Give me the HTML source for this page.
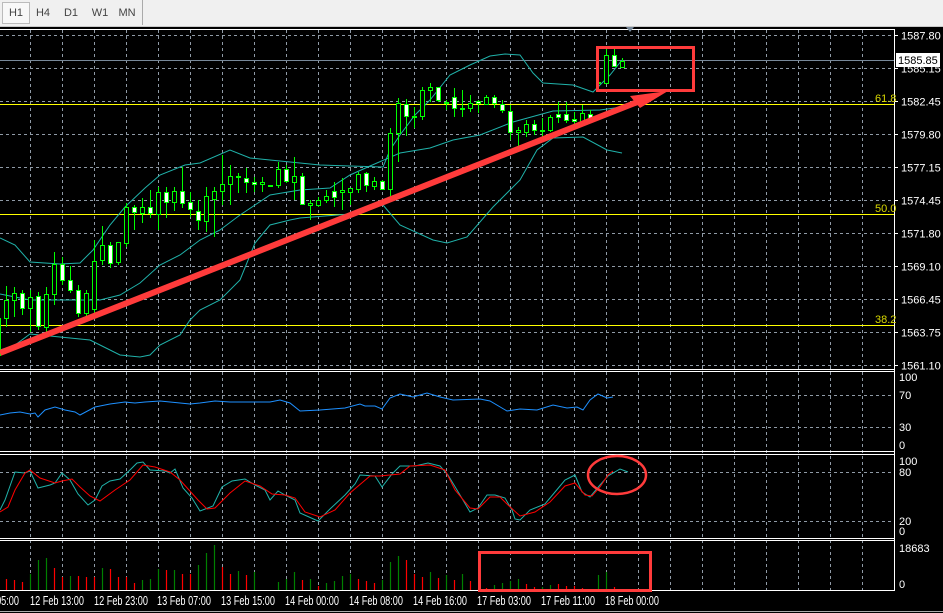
<!DOCTYPE html>
<html><head><meta charset="utf-8"><style>
html,body{margin:0;padding:0;background:#000;width:943px;height:613px;overflow:hidden;font-family:"Liberation Sans",sans-serif}
#tb{position:absolute;left:0;top:0;width:943px;height:26px;background:#f0f0f0;border-bottom:1px solid #c8c8c8}
.b{position:absolute;top:4px;height:18px;line-height:18px;font-size:11px;color:#444;text-align:center;width:26px}
#sel{background:#f8f8f8;border:1px solid #bbb;left:2px;top:2px;height:20px;line-height:20px;width:26px}
svg{position:absolute;left:0;top:0}
</style></head><body>
<div id="tb"><div class="b" id="sel">H1</div><div class="b" style="left:30px">H4</div><div class="b" style="left:58px">D1</div><div class="b" style="left:87px">W1</div><div class="b" style="left:114px">MN</div><div style="position:absolute;left:142px;top:0;width:1px;height:25px;background:#aaa"></div></div>
<svg id="s" width="943" height="613" style="top:0" xmlns="http://www.w3.org/2000/svg" font-family="Liberation Sans, sans-serif" font-size="11"></svg>
<script>
var S='';
function L(x1,y1,x2,y2,c,w,d){S+='<line x1="'+x1+'" y1="'+y1+'" x2="'+x2+'" y2="'+y2+'" stroke="'+c+'" stroke-width="'+(w||1)+'"'+(d?' stroke-dasharray="'+d+'"':'')+'/>';}
function T(x,y,t,c){S+='<text x="'+x+'" y="'+y+'" fill="'+(c||'#fff')+'">'+t+'</text>';}
function P(pts,c,w){S+='<polyline fill="none" stroke="'+c+'" stroke-width="'+(w||1)+'" points="'+pts.map(function(p){return p.join(',')}).join(' ')+'"/>';}
S+='<rect x="0" y="27" width="943" height="586" fill="#000"/>';
var G='#8f9aa6';
for(var x=30.5;x<894;x+=32)L(x,30,x,590,G,1,'3,3');
var pr=['1587.80','1585.15','1582.45','1579.80','1577.15','1574.45','1571.80','1569.10','1566.45','1563.75','1561.10'];
for(var i=0;i<11;i++){var y=35.5+33*i;L(0,y,894,y,G,1,'3,3');L(894,y,898,y,'#fff');T(901,y+4,pr[i]);}
[395.5,427.5,472.5,521.5].forEach(function(y){L(0,y,894,y,G,1,'3,3');});
[[377,'100'],[395,'70'],[427,'30'],[445,'0'],[461,'100'],[472,'80'],[521,'20'],[531,'0'],[548,'18683'],[584,'0']].forEach(function(a){T(899,a[0]+4,a[1]);});
L(0,29.5,894,29.5,'#fff');L(894.5,29,894.5,591,'#fff');
L(0,369.5,894,369.5,'#fff');L(0,371.5,894,371.5,'#fff');
L(0,451.5,894,451.5,'#fff');L(0,454.5,894,454.5,'#fff');
L(0,538.5,894,538.5,'#fff');L(0,540.5,894,540.5,'#fff');
L(0,590.5,894,590.5,'#fff');L(0,611.5,943,611.5,'#aaa');
L(0,60.5,894,60.5,'#778899');
[[104,'61.8'],[214,'50.0'],[325,'38.2']].forEach(function(a){L(0,a[0]+.5,894,a[0]+.5,'#ffff00');T(875,a[0]-2,a[1],'#d8d800');});
var BC='#20b2aa';
P([[0,238],[15,245],[30,262],[60,264],[80,263],[93,250],[110,225],[125,207],[145,188],[160,175],[185,165],[200,163],[230,150],[250,158],[270,160],[320,165],[350,166],[383,167],[390,150],[400,135],[415,115],[430,100],[450,75],[470,65],[490,56],[505,54],[520,55],[533,73],[543,83],[573,85],[593,92],[610,75],[622,60]],BC);
P([[0,294],[30,300],[100,300],[120,295],[140,283],[160,265],[180,255],[200,240],[220,230],[240,215],[255,205],[270,195],[300,190],[330,188],[350,175],[370,166],[400,153],[430,148],[453,140],[480,135],[513,122],[553,111],[600,110],[622,107]],BC);
P([[0,350],[15,345],[30,334],[60,337],[90,340],[100,345],[120,355],[140,357],[150,355],[160,345],[180,335],[190,320],[200,310],[220,300],[240,280],[255,243],[270,225],[290,220],[300,218],[350,214],[383,205],[400,225],[433,240],[447,243],[467,237],[493,207],[520,180],[537,150],[553,138],[583,137],[607,150],[622,153]],BC);
var C=[[-2,318,355,318,355,0],[6,300,318,286,327,0],[14,293,300,287,317,0],[22,293,308,290,315,1],[30,297,308,290,332,0],[38,296,326,292,330,1],[46,294,327,287,333,0],[54,264,294,252,305,0],[62,264,280,257,285,1],[70,280,290,266,293,1],[78,290,313,285,317,1],[86,293,313,290,320,0],[94,261,309,240,313,0],[102,245,260,226,265,0],[110,245,263,242,268,1],[118,242,262,242,265,0],[126,207,243,203,247,0],[134,207,212,205,230,1],[142,207,213,198,223,0],[150,207,213,190,218,1],[158,192,214,187,230,0],[166,192,202,187,218,1],[174,191,202,187,211,0],[182,191,203,167,208,1],[190,202,209,192,217,1],[198,211,220,200,230,1],[206,196,221,187,232,0],[214,191,199,187,237,0],[222,184,191,155,205,0],[230,176,184,165,205,0],[238,176,177,173,193,0],[246,178,182,168,193,1],[254,182,184,177,192,1],[262,182,184,177,192,0],[270,185,186,185,186,0],[278,169,185,162,188,0],[286,169,181,165,183,1],[294,176,182,157,200,0],[302,176,204,173,205,1],[310,203,205,200,220,0],[318,200,205,197,207,0],
[326,196,200,190,203,0],[334,191,197,182,207,1],[342,190,192,178,210,0],[350,188,192,188,205,0],[358,174,189,172,193,0],[366,173,185,172,192,1],[374,181,186,177,190,0],[382,181,189,180,190,1],[390,133,189,128,198,0],[398,103,133,98,162,0],[406,104,116,99,136,1],[414,116,117,107,128,0],[422,90,116,87,120,0],[430,87,90,83,102,0],[438,87,100,87,102,1],[446,102,103,100,110,0],[454,97,108,88,117,1],[462,108,109,90,117,0],[470,103,108,95,112,0],[478,101,103,100,113,1],[486,97,104,95,105,0],[494,97,103,95,108,1],[502,104,110,100,113,1],[510,111,132,105,140,1],[518,130,132,127,148,0],[526,124,132,120,137,0],[534,124,130,120,135,1],[542,130,131,118,137,0],[550,117,130,115,132,0],[558,114,117,102,123,1],[566,114,120,102,123,1],[574,119,121,112,127,1],[582,113,122,105,125,0],[590,114,120,110,123,1],[598,82,83,82,83,0],[606,55,83,47,83,0],[614,55,66,48,67,1],[622,61,67,58,68,0]];
C.forEach(function(c){var x=c[0]+.5;L(x,c[3],x,c[4],'#00ff00');var h=Math.max(1,c[2]-c[1]);S+='<rect x="'+(c[0]-1.5)+'" y="'+(c[1]+.5)+'" width="4" height="'+h+'" fill="'+(c[5]?'#fff':'#000')+'" stroke="#00ff00" stroke-width="1"/>';});
S+='<line x1="0" y1="353" x2="640" y2="101" stroke="#ff3b3b" stroke-width="6"/>';
S+='<polygon points="668,91 630,96 640,108" fill="#ff3b3b"/>';
S+='<rect x="597.5" y="47.5" width="96" height="43" fill="none" stroke="#ff3b3b" stroke-width="3"/>';
P([[0,415],[10,413],[20,412],[30,414],[35,413],[38,417],[45,410],[55,407],[65,410],[75,412],[80,415],[95,407],[110,404],[125,402],[135,403],[145,402],[160,401],[170,402],[190,404],[200,403],[215,401],[230,402],[270,402],[280,400],[290,403],[300,411],[320,410],[345,408],[360,404],[365,406],[375,406],[382,409],[390,398],[400,394],[413,397],[427,393],[440,397],[453,400],[480,399],[490,401],[507,411],[520,409],[537,410],[553,405],[567,408],[577,407],[583,410],[590,400],[598,394],[607,398],[613,397]],'#1e90ff');
P([[0,510],[5,500],[15,472],[25,473],[30,471],[38,488],[50,485],[55,483],[62,473],[70,480],[78,494],[88,505],[95,500],[102,486],[110,481],[120,479],[130,470],[137,463],[143,462],[150,470],[165,471],[170,473],[175,469],[183,488],[192,498],[200,511],[213,506],[222,487],[232,481],[245,479],[255,485],[265,490],[270,500],[278,491],[285,495],[295,500],[300,513],[318,521],[330,509],[345,495],[355,484],[360,475],[375,476],[382,487],[392,474],[400,466],[415,466],[428,463],[440,466],[448,475],[460,495],[470,512],[478,508],[487,495],[495,495],[505,498],[512,510],[515,519],[520,520],[530,510],[545,504],[555,492],[565,480],[575,475],[582,492],[590,497],[600,485],[608,476],[620,469],[628,472]],'#20b2aa');
P([[0,512],[8,507],[15,490],[25,473],[30,470],[40,478],[55,483],[62,481],[72,479],[80,487],[90,496],[100,501],[115,490],[130,480],[143,465],[155,467],[170,472],[180,480],[198,500],[207,509],[215,508],[230,493],[245,481],[260,486],[272,494],[285,495],[295,498],[305,512],[320,517],[335,510],[350,493],[370,476],[380,476],[400,474],[410,466],[430,465],[445,470],[455,490],[470,508],[478,509],[490,497],[500,497],[508,505],[520,516],[535,512],[550,502],[565,486],[575,483],[585,495],[592,496],[600,487],[608,475],[613,471]],'#ff0000');
S+='<ellipse cx="617" cy="475" rx="29" ry="19" fill="none" stroke="#ff3b3b" stroke-width="2.5"/>';
var V=[[6,579,0],[14,580,0],[22,582,0],[30,574,1],[38,560,1],[46,558,1],[54,568,0],[62,577,0],[70,576,1],[78,576,0],[86,577,0],[94,577,0],[102,568,1],[110,569,0],[118,577,0],[126,577,0],[134,583,0],[142,580,1],[150,579,1],[158,569,1],[166,570,0],[174,570,1],[182,574,0],[190,574,0],[198,565,1],[206,553,1],[214,545,1],[222,567,0],[230,574,0],[238,571,1],[246,575,0],[254,572,1],[278,582,1],[286,579,1],[294,572,1],[302,580,0],[310,579,1],[318,586,0],[326,583,1],[334,581,1],[342,576,1],[350,574,1],[358,579,0],[366,581,0],[374,583,0],[382,580,1],[390,562,1],[398,556,1],[406,560,0],[414,574,0],[422,577,0],[430,572,1],[438,578,0],[446,575,1],[454,580,0],[462,574,1],[470,581,0],[478,589,0],[486,588,0],[494,585,1],[502,583,1],[510,581,1],[518,579,1],[526,584,0],[534,587,0],[542,587,1],[550,585,1],[558,584,0],[566,586,0],[574,586,0],[582,588,0],[598,575,1],[606,572,1],[614,587,0]];
V.forEach(function(v){L(v[0]+.5,v[1],v[0]+.5,590,v[2]?'#008000':'#ff0000',1.2);});
S+='<rect x="479.5" y="552.5" width="171" height="38" fill="none" stroke="#ff3b3b" stroke-width="3"/>';
[[-35,'12 Feb 05:00'],[30,'12 Feb 13:00'],[94,'12 Feb 23:00'],[157,'13 Feb 07:00'],[221,'13 Feb 15:00'],[285,'14 Feb 00:00'],[349,'14 Feb 08:00'],[413,'14 Feb 16:00'],[477,'17 Feb 03:00'],[541,'17 Feb 11:00'],[605,'18 Feb 00:00']].forEach(function(a){S+='<text x="'+a[0]+'" y="605" fill="#fff" font-size="12.5" textLength="54" lengthAdjust="spacingAndGlyphs">'+a[1]+'</text>';});
S+='<rect x="896" y="53" width="44" height="14" fill="#fff"/><text x="898" y="64" fill="#000">1585.85</text>';
S+='<polygon points="626,27 634,27 630,32" fill="#778899"/>';
document.getElementById('s').innerHTML=S;
</script>
</body></html>
